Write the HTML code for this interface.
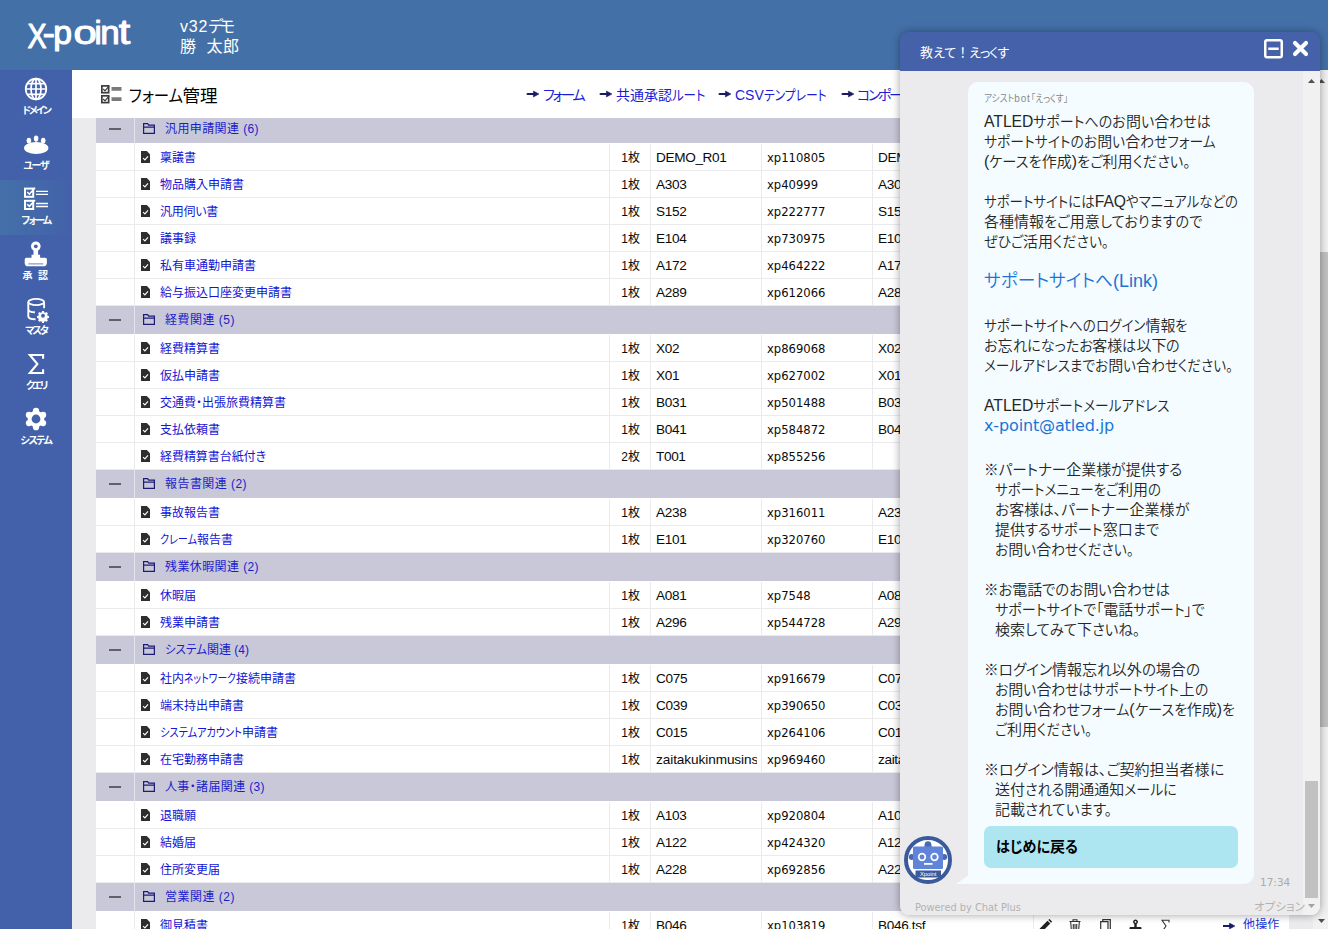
<!DOCTYPE html>
<html lang="ja"><head><meta charset="utf-8"><title>X-point フォーム管理</title>
<style>
*{box-sizing:border-box;margin:0;padding:0}
html,body{width:1328px;height:929px;overflow:hidden;background:#ebebee}
body{position:relative;font-family:"Liberation Sans","Noto Sans CJK JP",sans-serif;font-size:12px;color:#000;font-feature-settings:"palt" 1}
a{text-decoration:none;color:inherit}
.abs{position:absolute;white-space:nowrap}
#hdr{position:absolute;left:0;top:0;width:1328px;height:70px;background:#4470a8}
#hdr .u{position:absolute;left:180px;color:#fff;font-size:16px;line-height:20px;white-space:nowrap}
#side{position:absolute;left:0;top:70px;width:72px;height:859px;background:#4361aa}
#side .it{position:absolute;left:0;width:72px;height:55px}
#side .it.sel{background:linear-gradient(90deg,#4470a8 0%,#4361aa 100%)}
#side .it svg{position:absolute;left:20px;top:3px;width:32px;height:32px;overflow:visible}
#side .it .lb{position:absolute;left:0;width:72px;top:34px;text-align:center;color:#fff;font-size:10px;line-height:14px;font-weight:700;white-space:nowrap}
#main{position:absolute;left:72px;top:70px;width:1241px;height:859px;background:#ebebee;overflow:hidden}
#tbar{position:absolute;left:0;top:0;width:1241px;height:48px;background:#fff;z-index:5}
#tbar .ttl{position:absolute;left:56.500px;top:13px;font-size:17.500px;line-height:26px;color:#000;white-space:nowrap}
#tbar .lk{position:absolute;top:15px;font-size:14px;line-height:20px;color:#1c1cd4;white-space:nowrap}
#tbar svg.ar{position:absolute;top:21px;width:12px;height:6px;overflow:visible}
#grid{position:absolute;left:24px;top:45px;width:1193px;border-collapse:separate;border-spacing:0;table-layout:fixed;background:#fff}
#grid td{height:27px;border-bottom:1px solid #ebebee;border-right:1px solid #ebebee;padding:0;vertical-align:middle;white-space:nowrap;overflow:hidden;font-size:13px;color:#0a0a0a;line-height:18px}
#grid td:last-child{border-right:none}
#grid tr.g td{height:29px;background:#c8c8d8;border-bottom:1px solid #fff;border-right-color:#c8c8d8}
#grid tr.g td:first-child{border-right-color:#e4e4ec}
#grid tr.g .gn{position:relative;padding-left:30px;font-size:12px;color:#1c1ccc}
#grid tr.g .gn svg{position:absolute;left:8px;top:8px;width:12px;height:11px}
#grid .mn{display:block;margin:0 auto;width:12px;height:2px;background:#606068}
#grid td.nm{position:relative;padding-left:25px;font-size:12px;color:#1414d4}
#grid td.nm a{position:relative;top:1px}
#grid td.nm svg{position:absolute;left:6px;top:7px;width:9px;height:12px}
#grid td.ct{text-align:right;padding-right:10px;font-size:12px;padding-top:2px}
#grid td.cd{padding-left:5px;padding-top:1px;font-size:13.600px;letter-spacing:-0.350px}
#grid td.xp{padding-left:5px;padding-top:2px;font-family:"DejaVu Sans","Liberation Sans",sans-serif;font-size:11.6px}
#grid td.ac{position:relative}
#pscr{position:absolute;left:1313px;top:70px;width:17px;height:859px;background:#f1f1f1}
#pscr .th{position:absolute;left:2px;top:182px;width:13px;height:475px;background:#c1c1c1}
#pscr svg{position:absolute;left:5px;width:7px;height:4px}
#chat{position:absolute;left:900px;top:32px;width:420px;height:883px;border-radius:9px;background:linear-gradient(#4461a9 0,#4461a9 39px,#ebebed 39px,#ebebed 100%);box-shadow:0 0 9px rgba(0,0,0,.38);overflow:hidden;z-index:20}
#chat .hd{position:absolute;left:0;top:0;width:420px;height:39px;background:#4461a9}
#chat .hd .t{position:absolute;left:20px;top:11px;font-size:13px;line-height:20px;color:#fff;white-space:nowrap}
#chat .sb{position:absolute;left:403px;top:39px;width:17px;height:844px;background:#f1f1f1}
#chat .sb .th{position:absolute;left:2px;top:710px;width:13px;height:117px;background:#c1c1c1}
#chat .sb svg{position:absolute;left:5px;width:7px;height:4px}
#chat .bb{position:absolute;left:68px;top:50px;width:286px;height:802px;background:#f4fcff;border-radius:10px 10px 10px 0}
#chat .ln{position:absolute;white-space:nowrap;font-size:15px;line-height:20px;color:#262626;font-weight:350}
#chat .ln.k{color:#1b74d6;font-size:18px;line-height:24px}
#chat .nmn{position:absolute;left:84px;top:60px;font-size:10px;line-height:14px;color:#8a8a8a;white-space:nowrap}
#chat .btn{position:absolute;left:84px;top:794px;width:254px;height:42px;border-radius:7px;background:#ade6f1}
#chat .btn>span{position:absolute;left:12px;top:11px;font-size:15px;line-height:20px;font-weight:700;color:#000;white-space:nowrap}
#chat .tm{position:absolute;left:360px;top:843px;font-family:"DejaVu Sans",sans-serif;font-size:10.5px;line-height:14px;color:#aaa}
#chat .pw{position:absolute;left:15px;top:869px;font-family:"DejaVu Sans",sans-serif;font-size:9.800px;line-height:14px;color:#b2b2b2;white-space:nowrap}
#chat .op{position:absolute;left:354px;top:867px;font-size:11.500px;line-height:16px;color:#b2b2b2;white-space:nowrap}
</style></head>
<body>
<div id="hdr"><svg class="abs" style="left:20px;top:10px" width="130" height="50" viewBox="20 10 130 50" font-family="Liberation Sans, sans-serif" fill="#fff" stroke="#fff" stroke-linejoin="round" stroke-linecap="round"><text transform="translate(27.6 47.55) scale(0.8 1)" font-size="35.8" stroke-width="1.2">X</text><text transform="translate(42.6 45.1) scale(1.045 1)" font-size="36" stroke-width="0.8">-</text><text transform="translate(53.2 43.6) scale(1.03 1)" font-size="32.7" stroke-width="1.1">p</text><text transform="translate(73.4 43.6) scale(1.28 1)" font-size="32.7" stroke-width="1.0">o</text><text transform="translate(94.15 43.6) scale(1.05 1)" font-size="32.7" stroke-width="0.8">i</text><text transform="translate(100.3 43.6) scale(1.07 1)" font-size="32.7" stroke-width="1.0">n</text><text transform="translate(118.8 43.6) scale(1.26 1.07)" font-size="32.7" stroke-width="1.0">t</text></svg><div class="u" style="top:17px"><span style="letter-spacing:.850px">v32</span><span style="letter-spacing:-3.59px">デモ</span></div><div class="u" style="top:37px"><span style="letter-spacing:.550px">勝&nbsp;&nbsp;太郎</span></div></div>
<div id="side"><div class="it" style="top:0px"><svg viewBox="0 0 32 32"><g fill="none" stroke="#fff" stroke-width="1.7"><circle cx="16" cy="16" r="10.3"/><ellipse cx="16" cy="16" rx="5" ry="10.3"/><path d="M16 5.7v20.6M5.7 16h20.6M7.3 10.6h17.4M7.3 21.4h17.4"/></g></svg><div class="lb"><span style="letter-spacing:-2.08px">ドメイン</span></div></div><div class="it" style="top:55px"><svg viewBox="0 0 32 32"><g fill="#fff"><ellipse cx="16.2" cy="20.1" rx="12.2" ry="6"/><ellipse cx="8.9" cy="12.6" rx="2.3" ry="2.9"/><ellipse cx="16.1" cy="10.6" rx="2.3" ry="3.1"/><ellipse cx="23.2" cy="12.6" rx="2.3" ry="2.9"/></g></svg><div class="lb"><span style="letter-spacing:-1.35px">ユーザ</span></div></div><div class="it sel" style="top:110px"><svg viewBox="0 0 32 32"><g fill="none" stroke="#fff" transform="translate(0 -1.4)"><rect x="5" y="7" width="8.2" height="8.2" stroke-width="2"/><rect x="5" y="19.2" width="8.2" height="8.2" stroke-width="2"/><path d="M7.2 10.4l2.2 2.2 5.6-6.4M7.2 22.6l2.2 2.2 5.6-6.4" stroke-width="1.6"/><path d="M16 9.7h12M16 12.7h12M16 21.9h12M16 24.9h12" stroke-width="1.3"/></g></svg><div class="lb"><span style="letter-spacing:-1.55px">フォーム</span></div></div><div class="it" style="top:165px"><svg viewBox="0 0 32 32"><g transform="translate(-0.200 1.300)"><g fill="#fff"><path d="M16 2.2a4.8 4.8 0 0 0-2.3 9v4.3h-2v3h-5.2a1.6 1.6 0 0 0-1.6 1.6v3.5c0 2 1.4 3.4 3.4 3.4h15.4c2 0 3.4-1.4 3.4-3.4v-3.5a1.6 1.6 0 0 0-1.6-1.6h-5.2v-3h-2v-4.3a4.8 4.8 0 0 0-2.3-9z"/></g><circle cx="16" cy="7" r="1.9" fill="#4361aa"/><path d="M8.5 24.6h15" stroke="#4361aa" stroke-width="0.8"/></g></svg><div class="lb"><span style="letter-spacing:1.41px">承 認</span></div></div><div class="it" style="top:220px"><svg viewBox="0 0 32 32"><g fill="none" stroke="#fff" stroke-width="1.9"><ellipse cx="16.2" cy="9" rx="7.9" ry="3.1"/><path d="M8.3 9v14.200c0 1.800 3 3 7.200 3.100M24.100 9v6.200M8.300 16.200c0 1.700 2.800 2.900 6.600 3.100"/></g><g transform="translate(23 22.800) scale(0.920)"><path fill="#fff" d="M-1-5.2h2l.4 1.5 1.1.5 1.4-.8 1.4 1.4-.8 1.4.5 1.1 1.5.4v2l-1.500.4-.5 1.100.8 1.400-1.400 1.400-1.400-.800-1.100.500-.400 1.500h-2l-.4-1.5-1.1-.5-1.4.8-1.4-1.4.8-1.4-.5-1.1-1.5-.4v-2l1.5-.4.5-1.1-.8-1.4 1.4-1.4 1.4.8 1.1-.5z"/><circle r="2.100" fill="#4361aa"/></g></svg><div class="lb"><span style="letter-spacing:-2.10px">マスタ</span></div></div><div class="it" style="top:275px"><svg viewBox="0 0 32 32"><path d="M23.100 10.800v-3.800h-13.300l7.600 9-7.600 9h13.300v-3.800" fill="none" stroke="#fff" stroke-width="2.1" stroke-linejoin="miter"/></svg><div class="lb"><span style="letter-spacing:-2.40px">クエリ</span></div></div><div class="it" style="top:330px"><svg viewBox="0 0 32 32"><g fill="#fff"><circle cx="16" cy="16" r="8.3"/><circle cx="16.00" cy="7.80" r="3.1"/><circle cx="8.90" cy="11.90" r="3.1"/><circle cx="8.90" cy="20.10" r="3.1"/><circle cx="16.00" cy="24.20" r="3.1"/><circle cx="23.10" cy="20.10" r="3.1"/><circle cx="23.10" cy="11.90" r="3.1"/></g><circle cx="16" cy="16" r="4.4" fill="#4361aa"/></svg><div class="lb"><span style="letter-spacing:-1.45px">システム</span></div></div></div>
<div id="main"><div id="tbar"><svg class="abs" style="left:29px;top:15px" width="21" height="19" viewBox="0 0 21 19"><g fill="none" stroke="#3c3c3c" stroke-width="1.700"><rect x=".850" y=".900" width="6.800" height="6.800"/><rect x=".850" y="10.800" width="6.800" height="6.800"/><path d="M2.200 4l1.800 1.800 4.200-5M2.200 14l1.800 1.800 4.200-5" stroke-width="1.200"/></g><path d="M10.500 2h10v3.800h-10zM10.500 12.200h10v3.800h-10z" fill="#7a7a7a"/></svg><div class="ttl"><span><span style="display:inline-block;width:54.00px;transform:scaleX(0.8796);transform-origin:0 50%;white-space:nowrap">フォーム</span>管理</span></div><svg class="ar" style="left:455px" viewBox="0 0 12 6"><path d="M0.600 3h7" stroke="#1a1a60" stroke-width="2.200" stroke-linecap="round" fill="none"/><path d="M6.400 0l5.600 3-5.600 3z" fill="#1a1a60" stroke="#1a1a60" stroke-width="0.500" stroke-linejoin="round"/></svg><a class="lk" style="left:471px"><span style="letter-spacing:-2.16px">フォーム</span></a><svg class="ar" style="left:528px" viewBox="0 0 12 6"><path d="M0.600 3h7" stroke="#1a1a60" stroke-width="2.200" stroke-linecap="round" fill="none"/><path d="M6.400 0l5.600 3-5.600 3z" fill="#1a1a60" stroke="#1a1a60" stroke-width="0.500" stroke-linejoin="round"/></svg><a class="lk" style="left:544px"><span>共通承認<span style="display:inline-block;width:33.50px;transform:scaleX(0.8889);transform-origin:0 50%;white-space:nowrap">ルート</span></span></a><svg class="ar" style="left:647px" viewBox="0 0 12 6"><path d="M0.600 3h7" stroke="#1a1a60" stroke-width="2.200" stroke-linecap="round" fill="none"/><path d="M6.400 0l5.600 3-5.600 3z" fill="#1a1a60" stroke="#1a1a60" stroke-width="0.500" stroke-linejoin="round"/></svg><a class="lk" style="left:663px"><span>CSV<span style="display:inline-block;width:62.70px;transform:scaleX(0.8415);transform-origin:0 50%;white-space:nowrap">テンプレート</span></span></a><svg class="ar" style="left:770px" viewBox="0 0 12 6"><path d="M0.600 3h7" stroke="#1a1a60" stroke-width="2.200" stroke-linecap="round" fill="none"/><path d="M6.400 0l5.600 3-5.600 3z" fill="#1a1a60" stroke="#1a1a60" stroke-width="0.500" stroke-linejoin="round"/></svg><a class="lk" style="left:785px"><span style="letter-spacing:-2.38px">コンポーネント</span></a></div>
<table id="grid"><colgroup><col style="width:39px"><col style="width:475px"><col style="width:41px"><col style="width:111px"><col style="width:111px"><col style="width:161px"><col style="width:255px"></colgroup>
<tr class="g"><td><i class="mn"></i></td><td class="gn" colspan="6"><svg viewBox="0 0 12 11"><path d="M0.600 10.400v-9.800h4l1.100 1.600h5.700v8.200z M0.600 4.100h10.800" fill="none" stroke="#1c1c78" stroke-width="1.2"/></svg><span style="letter-spacing:0.40px">汎用申請関連 (6)</span></td></tr>
<tr><td></td><td class="nm"><svg viewBox="0 0 9 12"><path d="M0 0h5.800l3.200 3.200v8.800h-9z" fill="#2e2e2e"/><path d="M2.100 7.100l1.800 1.800 3.100-3.600" fill="none" stroke="#fff" stroke-width="1.150"/></svg><a><span style="letter-spacing:-0.01px">稟議書</span></a></td><td class="ct">1枚</td><td class="cd">DEMO_R01</td><td class="xp">xp110805</td><td class="cd">DEMO_R01.tsf</td><td class="ac"></td></tr>
<tr><td></td><td class="nm"><svg viewBox="0 0 9 12"><path d="M0 0h5.800l3.200 3.200v8.800h-9z" fill="#2e2e2e"/><path d="M2.100 7.100l1.800 1.800 3.100-3.600" fill="none" stroke="#fff" stroke-width="1.150"/></svg><a><span style="letter-spacing:-0.00px">物品購入申請書</span></a></td><td class="ct">1枚</td><td class="cd">A303</td><td class="xp">xp40999</td><td class="cd">A303.tsf</td><td class="ac"></td></tr>
<tr><td></td><td class="nm"><svg viewBox="0 0 9 12"><path d="M0 0h5.800l3.200 3.200v8.800h-9z" fill="#2e2e2e"/><path d="M2.100 7.100l1.800 1.800 3.100-3.600" fill="none" stroke="#fff" stroke-width="1.150"/></svg><a><span style="letter-spacing:-0.27px">汎用伺い書</span></a></td><td class="ct">1枚</td><td class="cd">S152</td><td class="xp">xp222777</td><td class="cd">S152.tsf</td><td class="ac"></td></tr>
<tr><td></td><td class="nm"><svg viewBox="0 0 9 12"><path d="M0 0h5.800l3.200 3.200v8.800h-9z" fill="#2e2e2e"/><path d="M2.100 7.100l1.800 1.800 3.100-3.600" fill="none" stroke="#fff" stroke-width="1.150"/></svg><a><span style="letter-spacing:-0.01px">議事録</span></a></td><td class="ct">1枚</td><td class="cd">E104</td><td class="xp">xp730975</td><td class="cd">E104.tsf</td><td class="ac"></td></tr>
<tr><td></td><td class="nm"><svg viewBox="0 0 9 12"><path d="M0 0h5.800l3.200 3.200v8.800h-9z" fill="#2e2e2e"/><path d="M2.100 7.100l1.800 1.800 3.100-3.600" fill="none" stroke="#fff" stroke-width="1.150"/></svg><a><span style="letter-spacing:-0.00px">私有車通勤申請書</span></a></td><td class="ct">1枚</td><td class="cd">A172</td><td class="xp">xp464222</td><td class="cd">A172.tsf</td><td class="ac"></td></tr>
<tr><td></td><td class="nm"><svg viewBox="0 0 9 12"><path d="M0 0h5.800l3.200 3.200v8.800h-9z" fill="#2e2e2e"/><path d="M2.100 7.100l1.800 1.800 3.100-3.600" fill="none" stroke="#fff" stroke-width="1.150"/></svg><a><span style="letter-spacing:-0.00px">給与振込口座変更申請書</span></a></td><td class="ct">1枚</td><td class="cd">A289</td><td class="xp">xp612066</td><td class="cd">A289.tsf</td><td class="ac"></td></tr>
<tr class="g"><td><i class="mn"></i></td><td class="gn" colspan="6"><svg viewBox="0 0 12 11"><path d="M0.600 10.400v-9.800h4l1.100 1.600h5.700v8.200z M0.600 4.100h10.800" fill="none" stroke="#1c1c78" stroke-width="1.2"/></svg><span style="letter-spacing:0.50px">経費関連 (5)</span></td></tr>
<tr><td></td><td class="nm"><svg viewBox="0 0 9 12"><path d="M0 0h5.800l3.200 3.200v8.800h-9z" fill="#2e2e2e"/><path d="M2.100 7.100l1.800 1.800 3.100-3.600" fill="none" stroke="#fff" stroke-width="1.150"/></svg><a><span style="letter-spacing:-0.00px">経費精算書</span></a></td><td class="ct">1枚</td><td class="cd">X02</td><td class="xp">xp869068</td><td class="cd">X02.tsf</td><td class="ac"></td></tr>
<tr><td></td><td class="nm"><svg viewBox="0 0 9 12"><path d="M0 0h5.800l3.200 3.200v8.800h-9z" fill="#2e2e2e"/><path d="M2.100 7.100l1.800 1.800 3.100-3.600" fill="none" stroke="#fff" stroke-width="1.150"/></svg><a><span style="letter-spacing:-0.00px">仮払申請書</span></a></td><td class="ct">1枚</td><td class="cd">X01</td><td class="xp">xp627002</td><td class="cd">X01.tsf</td><td class="ac"></td></tr>
<tr><td></td><td class="nm"><svg viewBox="0 0 9 12"><path d="M0 0h5.800l3.200 3.200v8.800h-9z" fill="#2e2e2e"/><path d="M2.100 7.100l1.800 1.800 3.100-3.600" fill="none" stroke="#fff" stroke-width="1.150"/></svg><a><span style="letter-spacing:-0.00px">交通費・出張旅費精算書</span></a></td><td class="ct">1枚</td><td class="cd">B031</td><td class="xp">xp501488</td><td class="cd">B031.tsf</td><td class="ac"></td></tr>
<tr><td></td><td class="nm"><svg viewBox="0 0 9 12"><path d="M0 0h5.800l3.200 3.200v8.800h-9z" fill="#2e2e2e"/><path d="M2.100 7.100l1.800 1.800 3.100-3.600" fill="none" stroke="#fff" stroke-width="1.150"/></svg><a><span style="letter-spacing:-0.00px">支払依頼書</span></a></td><td class="ct">1枚</td><td class="cd">B041</td><td class="xp">xp584872</td><td class="cd">B041.tsf</td><td class="ac"></td></tr>
<tr><td></td><td class="nm"><svg viewBox="0 0 9 12"><path d="M0 0h5.800l3.200 3.200v8.800h-9z" fill="#2e2e2e"/><path d="M2.100 7.100l1.800 1.800 3.100-3.600" fill="none" stroke="#fff" stroke-width="1.150"/></svg><a><span style="letter-spacing:-0.06px">経費精算書台紙付き</span></a></td><td class="ct">2枚</td><td class="cd">T001</td><td class="xp">xp855256</td><td class="cd"></td><td class="ac"></td></tr>
<tr class="g"><td><i class="mn"></i></td><td class="gn" colspan="6"><svg viewBox="0 0 12 11"><path d="M0.600 10.400v-9.800h4l1.100 1.600h5.700v8.200z M0.600 4.100h10.800" fill="none" stroke="#1c1c78" stroke-width="1.2"/></svg><span style="letter-spacing:0.44px">報告書関連 (2)</span></td></tr>
<tr><td></td><td class="nm"><svg viewBox="0 0 9 12"><path d="M0 0h5.800l3.200 3.200v8.800h-9z" fill="#2e2e2e"/><path d="M2.100 7.100l1.800 1.800 3.100-3.600" fill="none" stroke="#fff" stroke-width="1.150"/></svg><a><span style="letter-spacing:-0.00px">事故報告書</span></a></td><td class="ct">1枚</td><td class="cd">A238</td><td class="xp">xp316011</td><td class="cd">A238.tsf</td><td class="ac"></td></tr>
<tr><td></td><td class="nm"><svg viewBox="0 0 9 12"><path d="M0 0h5.800l3.200 3.200v8.800h-9z" fill="#2e2e2e"/><path d="M2.100 7.100l1.800 1.800 3.100-3.600" fill="none" stroke="#fff" stroke-width="1.150"/></svg><a><span><span style="display:inline-block;width:36.98px;transform:scaleX(0.8394);transform-origin:0 50%;white-space:nowrap">クレーム</span>報告書</span></a></td><td class="ct">1枚</td><td class="cd">E101</td><td class="xp">xp320760</td><td class="cd">E101.tsf</td><td class="ac"></td></tr>
<tr class="g"><td><i class="mn"></i></td><td class="gn" colspan="6"><svg viewBox="0 0 12 11"><path d="M0.600 10.400v-9.800h4l1.100 1.600h5.700v8.200z M0.600 4.100h10.800" fill="none" stroke="#1c1c78" stroke-width="1.2"/></svg><span style="letter-spacing:0.40px">残業休暇関連 (2)</span></td></tr>
<tr><td></td><td class="nm"><svg viewBox="0 0 9 12"><path d="M0 0h5.800l3.200 3.200v8.800h-9z" fill="#2e2e2e"/><path d="M2.100 7.100l1.800 1.800 3.100-3.600" fill="none" stroke="#fff" stroke-width="1.150"/></svg><a><span style="letter-spacing:-0.01px">休暇届</span></a></td><td class="ct">1枚</td><td class="cd">A081</td><td class="xp">xp7548</td><td class="cd">A081.tsf</td><td class="ac"></td></tr>
<tr><td></td><td class="nm"><svg viewBox="0 0 9 12"><path d="M0 0h5.800l3.200 3.200v8.800h-9z" fill="#2e2e2e"/><path d="M2.100 7.100l1.800 1.800 3.100-3.600" fill="none" stroke="#fff" stroke-width="1.150"/></svg><a><span style="letter-spacing:-0.00px">残業申請書</span></a></td><td class="ct">1枚</td><td class="cd">A296</td><td class="xp">xp544728</td><td class="cd">A296.tsf</td><td class="ac"></td></tr>
<tr class="g"><td><i class="mn"></i></td><td class="gn" colspan="6"><svg viewBox="0 0 12 11"><path d="M0.600 10.400v-9.800h4l1.100 1.600h5.700v8.200z M0.600 4.100h10.800" fill="none" stroke="#1c1c78" stroke-width="1.2"/></svg><span><span style="display:inline-block;width:41.98px;transform:scaleX(0.9610);transform-origin:0 50%;white-space:nowrap">システム</span>関連 (4)</span></td></tr>
<tr><td></td><td class="nm"><svg viewBox="0 0 9 12"><path d="M0 0h5.800l3.200 3.200v8.800h-9z" fill="#2e2e2e"/><path d="M2.100 7.100l1.800 1.800 3.100-3.600" fill="none" stroke="#fff" stroke-width="1.150"/></svg><a><span>社内<span style="display:inline-block;width:51.97px;transform:scaleX(0.8188);transform-origin:0 50%;white-space:nowrap">ネットワーク</span>接続申請書</span></a></td><td class="ct">1枚</td><td class="cd">C075</td><td class="xp">xp916679</td><td class="cd">C075.tsf</td><td class="ac"></td></tr>
<tr><td></td><td class="nm"><svg viewBox="0 0 9 12"><path d="M0 0h5.800l3.200 3.200v8.800h-9z" fill="#2e2e2e"/><path d="M2.100 7.100l1.800 1.800 3.100-3.600" fill="none" stroke="#fff" stroke-width="1.150"/></svg><a><span style="letter-spacing:-0.00px">端末持出申請書</span></a></td><td class="ct">1枚</td><td class="cd">C039</td><td class="xp">xp390650</td><td class="cd">C039.tsf</td><td class="ac"></td></tr>
<tr><td></td><td class="nm"><svg viewBox="0 0 9 12"><path d="M0 0h5.800l3.200 3.200v8.800h-9z" fill="#2e2e2e"/><path d="M2.100 7.100l1.800 1.800 3.100-3.600" fill="none" stroke="#fff" stroke-width="1.150"/></svg><a><span><span style="display:inline-block;width:81.98px;transform:scaleX(0.8479);transform-origin:0 50%;white-space:nowrap">システムアカウント</span>申請書</span></a></td><td class="ct">1枚</td><td class="cd">C015</td><td class="xp">xp264106</td><td class="cd">C015.tsf</td><td class="ac"></td></tr>
<tr><td></td><td class="nm"><svg viewBox="0 0 9 12"><path d="M0 0h5.800l3.200 3.200v8.800h-9z" fill="#2e2e2e"/><path d="M2.100 7.100l1.800 1.800 3.100-3.600" fill="none" stroke="#fff" stroke-width="1.150"/></svg><a><span style="letter-spacing:-0.00px">在宅勤務申請書</span></a></td><td class="ct">1枚</td><td class="cd"><span style="display:block;width:100.5px;overflow:hidden;letter-spacing:-0.08px">zaitakukinmusinsei</span></td><td class="xp">xp969460</td><td class="cd">zaitakukinmusinsei.tsf</td><td class="ac"></td></tr>
<tr class="g"><td><i class="mn"></i></td><td class="gn" colspan="6"><svg viewBox="0 0 12 11"><path d="M0.600 10.400v-9.800h4l1.100 1.600h5.700v8.200z M0.600 4.100h10.800" fill="none" stroke="#1c1c78" stroke-width="1.2"/></svg><span style="letter-spacing:0.36px">人事・諸届関連 (3)</span></td></tr>
<tr><td></td><td class="nm"><svg viewBox="0 0 9 12"><path d="M0 0h5.800l3.200 3.200v8.800h-9z" fill="#2e2e2e"/><path d="M2.100 7.100l1.800 1.800 3.100-3.600" fill="none" stroke="#fff" stroke-width="1.150"/></svg><a><span style="letter-spacing:-0.01px">退職願</span></a></td><td class="ct">1枚</td><td class="cd">A103</td><td class="xp">xp920804</td><td class="cd">A103.tsf</td><td class="ac"></td></tr>
<tr><td></td><td class="nm"><svg viewBox="0 0 9 12"><path d="M0 0h5.800l3.200 3.200v8.800h-9z" fill="#2e2e2e"/><path d="M2.100 7.100l1.800 1.800 3.100-3.600" fill="none" stroke="#fff" stroke-width="1.150"/></svg><a><span style="letter-spacing:-0.01px">結婚届</span></a></td><td class="ct">1枚</td><td class="cd">A122</td><td class="xp">xp424320</td><td class="cd">A122.tsf</td><td class="ac"></td></tr>
<tr><td></td><td class="nm"><svg viewBox="0 0 9 12"><path d="M0 0h5.800l3.200 3.200v8.800h-9z" fill="#2e2e2e"/><path d="M2.100 7.100l1.800 1.800 3.100-3.600" fill="none" stroke="#fff" stroke-width="1.150"/></svg><a><span style="letter-spacing:-0.00px">住所変更届</span></a></td><td class="ct">1枚</td><td class="cd">A228</td><td class="xp">xp692856</td><td class="cd">A228.tsf</td><td class="ac"></td></tr>
<tr class="g"><td><i class="mn"></i></td><td class="gn" colspan="6"><svg viewBox="0 0 12 11"><path d="M0.600 10.400v-9.800h4l1.100 1.600h5.700v8.200z M0.600 4.100h10.800" fill="none" stroke="#1c1c78" stroke-width="1.2"/></svg><span style="letter-spacing:0.50px">営業関連 (2)</span></td></tr>
<tr><td></td><td class="nm"><svg viewBox="0 0 9 12"><path d="M0 0h5.800l3.200 3.200v8.800h-9z" fill="#2e2e2e"/><path d="M2.100 7.100l1.800 1.800 3.100-3.600" fill="none" stroke="#fff" stroke-width="1.150"/></svg><a><span style="letter-spacing:-0.00px">御見積書</span></a></td><td class="ct">1枚</td><td class="cd">B046</td><td class="xp">xp103819</td><td class="cd">B046.tsf</td><td class="ac"><svg class="abs" style="left:4px;top:7px" width="14" height="14" viewBox="0 0 14 14"><path d="M1 13l.8-3.600 7.700-7.700 2.800 2.800-7.700 7.700z" fill="#222"/><path d="M10.300 .900l1.100-1 2.700 2.700-1 1.100z" fill="#222"/></svg><svg class="abs" style="left:35px;top:7px" width="12" height="14" viewBox="0 0 12 14"><path d="M0.500 2.500h11M4 2.300v-1.500h4v1.500M1.700 3l.8 10.300h7l.8-10.300M4.300 5v6.500M6 5v6.500M7.700 5v6.500" fill="none" stroke="#333" stroke-width="1.100"/></svg><svg class="abs" style="left:66px;top:7px" width="11" height="14" viewBox="0 0 11 14"><path d="M2.800 2.500v-1.800h7.500v10.500h-2M0.700 2.700h7.300v10.600h-7.300z" fill="none" stroke="#333" stroke-width="1.200"/></svg><svg class="abs" style="left:95px;top:7px" width="13" height="14" viewBox="0 0 13 14"><path d="M6.500 .500a2.400 2.400 0 0 0-1.200 4.500v3h-3.800a1 1 0 0 0-1 1v2.200c0 1.200.8 2 2 2h8c1.200 0 2-.8 2-2v-2.200a1 1 0 0 0-1-1h-3.800v-3a2.400 2.400 0 0 0-1.200-4.500z" fill="#222"/><circle cx="6.500" cy="2.900" r=".9" fill="#fff"/></svg><svg class="abs" style="left:127px;top:7px" width="9" height="14" viewBox="0 0 9 14"><path d="M8 3.500v-2.300h-7l4 5.800-4 5.800h7v-2.300" fill="none" stroke="#333" stroke-width="1.100"/></svg><svg class="abs" style="left:189px;top:11px" width="12" height="6" viewBox="0 0 12 6"><path d="M0.600 3h7" stroke="#1a1a60" stroke-width="2.200" stroke-linecap="round" fill="none"/><path d="M6.400 0l5.600 3-5.600 3z" fill="#1a1a60" stroke="#1a1a60" stroke-width="0.500" stroke-linejoin="round"/></svg><span class="abs" style="left:209px;top:4px;font-size:12px;color:#1f2fd0"><span style="letter-spacing:0.16px">他操作</span></span></td></tr>
</table></div>
<div id="pscr"><svg style="top:9px" viewBox="0 0 7 4"><path d="M0 4l3.500-4 3.500 4z" fill="#505050"/></svg><div class="th"></div><svg style="top:849px" viewBox="0 0 7 4"><path d="M0 0l3.500 4 3.500-4z" fill="#505050"/></svg></div>
<div id="chat"><div class="hd"><div class="t"><span style="letter-spacing:0.07px">教えて</span><span style="font-feature-settings:normal">！</span><span style="letter-spacing:-1.01px">えっくす</span></div><svg class="abs" style="left:362px;top:5px" width="24" height="24" viewBox="0 0 24 24"><rect x="3.250" y="3.250" width="16.500" height="17" rx="1.800" fill="none" stroke="#fff" stroke-width="2.500"/><path d="M6.300 11.700h10.400" stroke="#fff" stroke-width="2.600"/></svg><svg class="abs" style="left:392px;top:8px" width="17" height="17" viewBox="0 0 17 17"><path d="M3 3l11 11M14 3l-11 11" stroke="#fff" stroke-width="4.100" stroke-linecap="round"/></svg></div><div class="sb"><svg style="top:8px" viewBox="0 0 7 4"><path d="M0 4l3.500-4 3.500 4z" fill="#505050"/></svg><div class="th"></div><svg style="top:833px" viewBox="0 0 7 4"><path d="M0 0l3.500 4 3.500-4z" fill="#a3a3a3"/></svg></div><div class="bb"></div><svg class="abs" style="left:55px;top:843px" width="14" height="9" viewBox="0 0 14 9"><path d="M14 0v9h-13z" fill="#f4fcff"/></svg><div class="nmn"><span><span style="display:inline-block;width:30.20px;transform:scaleX(0.8659);transform-origin:0 50%;white-space:nowrap">アシスト</span><span style="letter-spacing:.900px">bot</span><span style="display:inline-block;width:37.19px;transform:scaleX(0.8659);transform-origin:0 50%;white-space:nowrap">「えっくす」</span></span></div><div class="ln" style="left:84px;top:80px;"><span><span style="font-size:15.700px;letter-spacing:0">ATLED</span><span style="display:inline-block;width:92.62px;transform:scaleX(0.9354);transform-origin:0 50%;white-space:nowrap">サポートへのお</span>問<span style="display:inline-block;width:13.26px;transform:scaleX(0.9354);transform-origin:0 50%;white-space:nowrap">い</span>合<span style="display:inline-block;width:41.68px;transform:scaleX(0.9354);transform-origin:0 50%;white-space:nowrap">わせは</span></span></div><div class="ln" style="left:84px;top:100px;"><span><span style="display:inline-block;width:113.13px;transform:scaleX(0.9221);transform-origin:0 50%;white-space:nowrap">サポートサイトのお</span>問<span style="display:inline-block;width:13.07px;transform:scaleX(0.9221);transform-origin:0 50%;white-space:nowrap">い</span>合<span style="display:inline-block;width:75.77px;transform:scaleX(0.9221);transform-origin:0 50%;white-space:nowrap">わせフォーム</span></span></div><div class="ln" style="left:84px;top:120px;"><span><span style="font-size:15.700px;letter-spacing:0">(</span><span style="display:inline-block;width:52.50px;transform:scaleX(0.9476);transform-origin:0 50%;white-space:nowrap">ケースを</span>作成<span style="font-size:15.700px;letter-spacing:0">)</span><span style="display:inline-block;width:25.64px;transform:scaleX(0.9476);transform-origin:0 50%;white-space:nowrap">をご</span>利用<span style="display:inline-block;width:57.36px;transform:scaleX(0.9476);transform-origin:0 50%;white-space:nowrap">ください。</span></span></div><div class="ln" style="left:84px;top:160px;"><span><span style="display:inline-block;width:110.68px;transform:scaleX(0.8977);transform-origin:0 50%;white-space:nowrap">サポートサイトには</span><span style="font-size:15.700px;letter-spacing:0">FAQ</span><span style="display:inline-block;width:111.93px;transform:scaleX(0.8977);transform-origin:0 50%;white-space:nowrap">やマニュアルなどの</span></span></div><div class="ln" style="left:84px;top:180px;"><span>各種情報<span style="display:inline-block;width:25.61px;transform:scaleX(0.9463);transform-origin:0 50%;white-space:nowrap">をご</span>用意<span style="display:inline-block;width:102.36px;transform:scaleX(0.9463);transform-origin:0 50%;white-space:nowrap">しておりますので</span></span></div><div class="ln" style="left:84px;top:200px;"><span><span style="display:inline-block;width:39.09px;transform:scaleX(0.9234);transform-origin:0 50%;white-space:nowrap">ぜひご</span>活用<span style="display:inline-block;width:55.90px;transform:scaleX(0.9234);transform-origin:0 50%;white-space:nowrap">ください。</span></span></div><div class="ln k" style="left:84px;top:237px;"><span><span style="display:inline-block;width:128.98px;transform:scaleX(0.9854);transform-origin:0 50%;white-space:nowrap">サポートサイトへ</span>(Link)</span></div><div class="ln" style="left:84px;top:284px;"><span><span style="display:inline-block;width:161.43px;transform:scaleX(0.9055);transform-origin:0 50%;white-space:nowrap">サポートサイトへのログイン</span>情報<span style="display:inline-block;width:12.55px;transform:scaleX(0.9055);transform-origin:0 50%;white-space:nowrap">を</span></span></div><div class="ln" style="left:84px;top:304px;"><span><span style="display:inline-block;width:13.52px;transform:scaleX(0.9397);transform-origin:0 50%;white-space:nowrap">お</span>忘<span style="display:inline-block;width:79.73px;transform:scaleX(0.9397);transform-origin:0 50%;white-space:nowrap">れになったお</span>客様<span style="display:inline-block;width:14.11px;transform:scaleX(0.9397);transform-origin:0 50%;white-space:nowrap">は</span>以下<span style="display:inline-block;width:13.60px;transform:scaleX(0.9397);transform-origin:0 50%;white-space:nowrap">の</span></span></div><div class="ln" style="left:84px;top:324px;"><span><span style="display:inline-block;width:124.17px;transform:scaleX(0.9094);transform-origin:0 50%;white-space:nowrap">メールアドレスまでお</span>問<span style="display:inline-block;width:12.89px;transform:scaleX(0.9094);transform-origin:0 50%;white-space:nowrap">い</span>合<span style="display:inline-block;width:81.91px;transform:scaleX(0.9094);transform-origin:0 50%;white-space:nowrap">わせください。</span></span></div><div class="ln" style="left:84px;top:364px;"><span><span style="font-size:15.700px;letter-spacing:0">ATLED</span><span style="display:inline-block;width:136.59px;transform:scaleX(0.9142);transform-origin:0 50%;white-space:nowrap">サポートメールアドレス</span></span></div><div class="ln k" style="left:84px;top:382px;font-family:'DejaVu Sans',sans-serif;font-size:16px;font-weight:400;"><span style="letter-spacing:-0.14px">x-point@atled.jp</span></div><div class="ln" style="left:84px;top:428px;"><span><span style="display:inline-block;width:82.35px;transform:scaleX(0.9739);transform-origin:0 50%;white-space:nowrap">※パートナー</span>企業様<span style="display:inline-block;width:14.30px;transform:scaleX(0.9739);transform-origin:0 50%;white-space:nowrap">が</span>提供<span style="display:inline-block;width:26.31px;transform:scaleX(0.9739);transform-origin:0 50%;white-space:nowrap">する</span></span></div><div class="ln" style="left:95px;top:448px;"><span><span style="display:inline-block;width:122.94px;transform:scaleX(0.9013);transform-origin:0 50%;white-space:nowrap">サポートメニューをご</span>利用<span style="display:inline-block;width:13.04px;transform:scaleX(0.9013);transform-origin:0 50%;white-space:nowrap">の</span></span></div><div class="ln" style="left:95px;top:468px;"><span><span style="display:inline-block;width:14.13px;transform:scaleX(0.9821);transform-origin:0 50%;white-space:nowrap">お</span>客様<span style="display:inline-block;width:90.41px;transform:scaleX(0.9821);transform-origin:0 50%;white-space:nowrap">は、パートナー</span>企業様<span style="display:inline-block;width:14.42px;transform:scaleX(0.9821);transform-origin:0 50%;white-space:nowrap">が</span></span></div><div class="ln" style="left:95px;top:488px;"><span>提供<span style="display:inline-block;width:77.70px;transform:scaleX(0.9481);transform-origin:0 50%;white-space:nowrap">するサポート</span>窓口<span style="display:inline-block;width:26.27px;transform:scaleX(0.9481);transform-origin:0 50%;white-space:nowrap">まで</span></span></div><div class="ln" style="left:95px;top:508px;"><span><span style="display:inline-block;width:13.22px;transform:scaleX(0.9185);transform-origin:0 50%;white-space:nowrap">お</span>問<span style="display:inline-block;width:13.02px;transform:scaleX(0.9185);transform-origin:0 50%;white-space:nowrap">い</span>合<span style="display:inline-block;width:82.73px;transform:scaleX(0.9185);transform-origin:0 50%;white-space:nowrap">わせください。</span></span></div><div class="ln" style="left:84px;top:548px;"><span><span style="display:inline-block;width:28.29px;transform:scaleX(0.9626);transform-origin:0 50%;white-space:nowrap">※お</span>電話<span style="display:inline-block;width:41.12px;transform:scaleX(0.9626);transform-origin:0 50%;white-space:nowrap">でのお</span>問<span style="display:inline-block;width:13.64px;transform:scaleX(0.9626);transform-origin:0 50%;white-space:nowrap">い</span>合<span style="display:inline-block;width:42.90px;transform:scaleX(0.9626);transform-origin:0 50%;white-space:nowrap">わせは</span></span></div><div class="ln" style="left:95px;top:568px;"><span><span style="display:inline-block;width:108.28px;transform:scaleX(0.9399);transform-origin:0 50%;white-space:nowrap">サポートサイトで「</span>電話<span style="display:inline-block;width:71.71px;transform:scaleX(0.9399);transform-origin:0 50%;white-space:nowrap">サポート」で</span></span></div><div class="ln" style="left:95px;top:588px;"><span>検索<span style="display:inline-block;width:52.07px;transform:scaleX(0.9555);transform-origin:0 50%;white-space:nowrap">してみて</span>下<span style="display:inline-block;width:47.89px;transform:scaleX(0.9555);transform-origin:0 50%;white-space:nowrap">さいね。</span></span></div><div class="ln" style="left:84px;top:628px;"><span><span style="display:inline-block;width:68.07px;transform:scaleX(0.9757);transform-origin:0 50%;white-space:nowrap">※ログイン</span>情報忘<span style="display:inline-block;width:14.65px;transform:scaleX(0.9757);transform-origin:0 50%;white-space:nowrap">れ</span>以外<span style="display:inline-block;width:14.12px;transform:scaleX(0.9757);transform-origin:0 50%;white-space:nowrap">の</span>場合<span style="display:inline-block;width:14.12px;transform:scaleX(0.9757);transform-origin:0 50%;white-space:nowrap">の</span></span></div><div class="ln" style="left:95px;top:648px;"><span><span style="display:inline-block;width:13.32px;transform:scaleX(0.9257);transform-origin:0 50%;white-space:nowrap">お</span>問<span style="display:inline-block;width:13.12px;transform:scaleX(0.9257);transform-origin:0 50%;white-space:nowrap">い</span>合<span style="display:inline-block;width:128.12px;transform:scaleX(0.9257);transform-origin:0 50%;white-space:nowrap">わせはサポートサイト</span>上<span style="display:inline-block;width:13.39px;transform:scaleX(0.9257);transform-origin:0 50%;white-space:nowrap">の</span></span></div><div class="ln" style="left:95px;top:668px;"><span><span style="display:inline-block;width:13.55px;transform:scaleX(0.9416);transform-origin:0 50%;white-space:nowrap">お</span>問<span style="display:inline-block;width:13.34px;transform:scaleX(0.9416);transform-origin:0 50%;white-space:nowrap">い</span>合<span style="display:inline-block;width:77.37px;transform:scaleX(0.9416);transform-origin:0 50%;white-space:nowrap">わせフォーム</span><span style="font-size:15.700px;letter-spacing:0">(</span><span style="display:inline-block;width:52.17px;transform:scaleX(0.9416);transform-origin:0 50%;white-space:nowrap">ケースを</span>作成<span style="font-size:15.700px;letter-spacing:0">)</span><span style="display:inline-block;width:13.05px;transform:scaleX(0.9416);transform-origin:0 50%;white-space:nowrap">を</span></span></div><div class="ln" style="left:95px;top:688px;"><span><span style="display:inline-block;width:12.01px;transform:scaleX(0.9083);transform-origin:0 50%;white-space:nowrap">ご</span>利用<span style="display:inline-block;width:54.98px;transform:scaleX(0.9083);transform-origin:0 50%;white-space:nowrap">ください。</span></span></div><div class="ln" style="left:84px;top:728px;"><span><span style="display:inline-block;width:69.78px;transform:scaleX(1.0003);transform-origin:0 50%;white-space:nowrap">※ログイン</span>情報<span style="display:inline-block;width:35.73px;transform:scaleX(1.0003);transform-origin:0 50%;white-space:nowrap">は、ご</span>契約担当者様<span style="display:inline-block;width:14.46px;transform:scaleX(1.0003);transform-origin:0 50%;white-space:nowrap">に</span></span></div><div class="ln" style="left:95px;top:748px;"><span>送付<span style="display:inline-block;width:39.17px;transform:scaleX(0.9365);transform-origin:0 50%;white-space:nowrap">される</span>開通通知<span style="display:inline-block;width:52.80px;transform:scaleX(0.9365);transform-origin:0 50%;white-space:nowrap">メールに</span></span></div><div class="ln" style="left:95px;top:768px;"><span>記載<span style="display:inline-block;width:86.98px;transform:scaleX(0.9741);transform-origin:0 50%;white-space:nowrap">されています。</span></span></div><div class="btn"><span><span><span style="display:inline-block;width:54.03px;transform:scaleX(0.9354);transform-origin:0 50%;white-space:nowrap">はじめに</span>戻<span style="display:inline-block;width:12.95px;transform:scaleX(0.9354);transform-origin:0 50%;white-space:nowrap">る</span></span></span></div><svg class="abs" style="left:3px;top:803px" width="50" height="50" viewBox="0 0 50 50"><circle cx="25" cy="25" r="22" fill="#fff" stroke="#3b5a9c" stroke-width="4"/><circle cx="25" cy="9.500" r="3.200" fill="#4a68b4"/><rect x="21.500" y="9.500" width="7" height="3" fill="#4a68b4"/><circle cx="8.800" cy="22" r="3" fill="#4a68b4"/><circle cx="41.200" cy="22" r="3" fill="#4a68b4"/><rect x="10" y="11.500" width="30" height="22.500" rx="1.500" fill="#5f84d8"/><circle cx="19" cy="22" r="3.300" fill="#5f84d8" stroke="#fff" stroke-width="1.700"/><circle cx="31.500" cy="22" r="3.300" fill="#5f84d8" stroke="#fff" stroke-width="1.700"/><rect x="21" y="28" width="8.500" height="1.800" fill="#fff"/><rect x="12.500" y="35.500" width="25.500" height="7" fill="#3b5a9c"/><text x="25.200" y="41.300" font-family="Liberation Sans, sans-serif" font-size="5.800" fill="#fff" text-anchor="middle">Xpoint</text></svg><div class="tm">17:34</div><div class="pw">Powered by Chat Plus</div><div class="op"><span style="letter-spacing:0.08px">オプション</span></div></div>

</body></html>
